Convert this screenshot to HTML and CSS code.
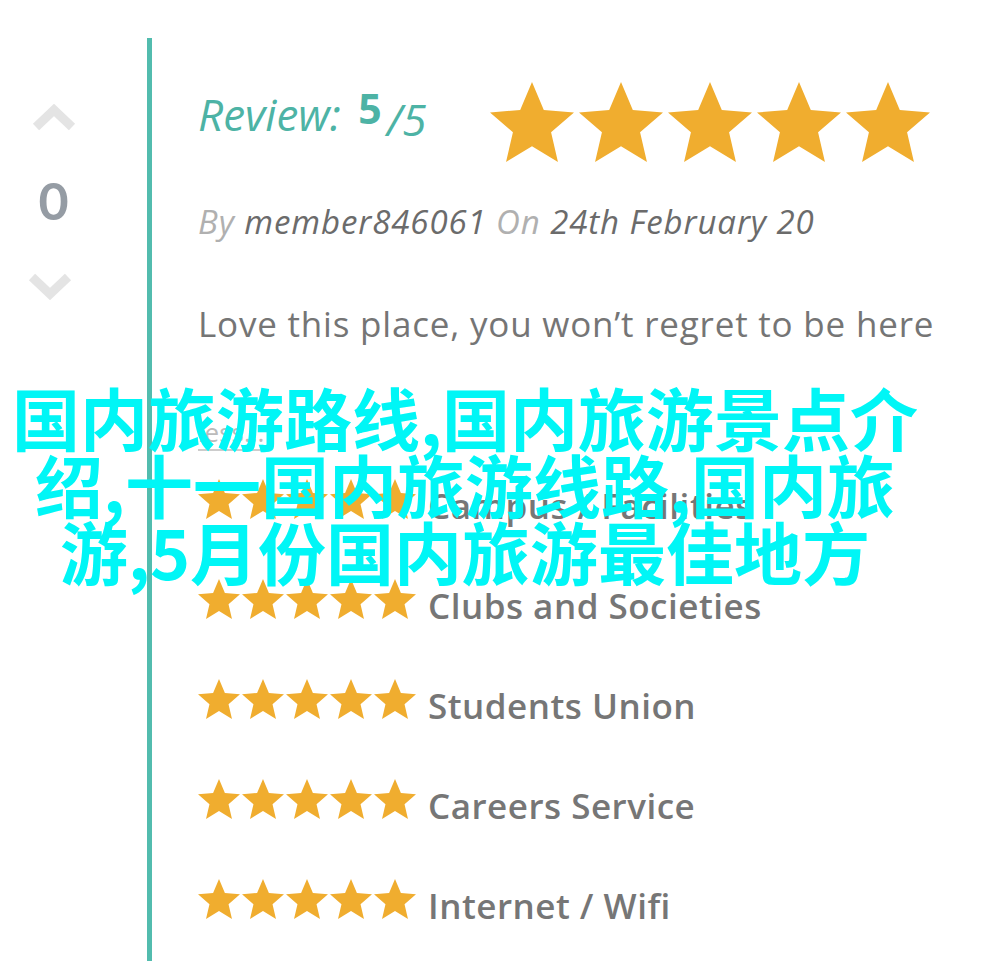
FILE: index.html
```html
<!DOCTYPE html>
<html lang="zh">
<head>
    <meta charset="UTF-8">
    <title>国内旅游路线</title>
    <link rel="stylesheet" href="styles.css">
</head>
<body>
    <svg width="0" height="0" class="defs">
        <defs>
            <symbol id="star" viewBox="2 2 20 19">
                <polygon points="12,17.27 18.18,21 16.54,13.97 22,9.24 14.81,8.63 12,2 9.19,8.63 2,9.24 7.46,13.97 5.82,21"/>
            </symbol>
        </defs>
    </svg>

    <div class="review">
        <div class="vote">
            <svg class="arrow" width="44" height="30" viewBox="0 0 44 30"><polyline points="4,25 22,8 40,25"/></svg>
            <div class="count">0</div>
            <svg class="arrow down" width="44" height="30" viewBox="0 0 44 30"><polyline points="4,7 22,24 40,7"/></svg>
        </div>

        <div class="content">
            <div class="head">
                <h2 class="title">Review: <b>5</b><span class="of">/5</span></h2>
                <div class="stars big">
                    <svg><use href="#star"/></svg>
                    <svg><use href="#star"/></svg>
                    <svg><use href="#star"/></svg>
                    <svg><use href="#star"/></svg>
                    <svg><use href="#star"/></svg>
                </div>
            </div>

            <p class="meta"><span class="dim">By</span> member846061 <span class="dim">On</span> 24th February 20</p>

            <p class="text">Love this place, you won’t regret to be here</p>

            <a class="less" href="#">less...</a>

            <ul class="ratings">
                <li>
                    <div class="stars"><svg><use href="#star"/></svg><svg><use href="#star"/></svg><svg><use href="#star"/></svg><svg><use href="#star"/></svg><svg><use href="#star"/></svg></div>
                    <span>Campus / Facilities</span>
                </li>
                <li>
                    <div class="stars"><svg><use href="#star"/></svg><svg><use href="#star"/></svg><svg><use href="#star"/></svg><svg><use href="#star"/></svg><svg><use href="#star"/></svg></div>
                    <span>Clubs and Societies</span>
                </li>
                <li>
                    <div class="stars"><svg><use href="#star"/></svg><svg><use href="#star"/></svg><svg><use href="#star"/></svg><svg><use href="#star"/></svg><svg><use href="#star"/></svg></div>
                    <span>Students Union</span>
                </li>
                <li>
                    <div class="stars"><svg><use href="#star"/></svg><svg><use href="#star"/></svg><svg><use href="#star"/></svg><svg><use href="#star"/></svg><svg><use href="#star"/></svg></div>
                    <span>Careers Service</span>
                </li>
                <li>
                    <div class="stars"><svg><use href="#star"/></svg><svg><use href="#star"/></svg><svg><use href="#star"/></svg><svg><use href="#star"/></svg><svg><use href="#star"/></svg></div>
                    <span>Internet / Wifi</span>
                </li>
            </ul>
        </div>
    </div>

    <h1 class="caption">国内旅游路线,国内旅游景点介绍,十一国内旅游线路,国内旅游,5月份国内旅游最佳地方</h1>
</body>
</html>
```

FILE: styles.css
```css
body {
    margin: 0;
    font-family: "Open Sans", Lato, sans-serif;
    background: #fff;
    height: 961px;
    overflow: hidden;
    position: relative;
}
.defs {
    position: absolute;
}
.review {
    display: flex;
    padding-top: 38px;
    height: 923px;
}
.vote {
    width: 147px;
    display: flex;
    flex-direction: column;
    align-items: center;
    padding-top: 64px;
    box-sizing: border-box;
}
.arrow {
    display: block;
    margin-right: 40px;
}
.arrow polyline {
    fill: none;
    stroke: #e4e4e4;
    stroke-width: 9;
}
.arrow.down {
    margin-right: 48px;
    margin-top: 44px;
}
.count {
    font-family: Lato, sans-serif;
    font-size: 52px;
    font-weight: bold;
    color: #959ca4;
    margin-top: 42px;
    margin-right: 40px;
    line-height: 52px;
}
.content {
    flex: 1;
    border-left: 5px solid #52bcae;
    padding-left: 46px;
}
.head {
    display: flex;
    align-items: center;
    margin-top: 44px;
}
.title {
    margin: 0 0 18px;
    width: 292px;
    font-size: 44px;
    font-style: italic;
    font-weight: normal;
    color: #4db3a5;
    line-height: 50px;
    white-space: nowrap;
}
.title b {
    font-style: normal;
    font-size: 41px;
    margin-left: 6px;
    vertical-align: 7px;
}
.title .of {
    font-size: 44px;
    margin-left: 5px;
    vertical-align: -5px;
}
.stars {
    display: flex;
    gap: 2px;
}
.stars svg {
    width: 42px;
    height: 40px;
    fill: #f0ad2f;
}
.stars.big {
    gap: 5px;
}
.stars.big svg {
    width: 84px;
    height: 80px;
}
.meta {
    margin: 40px 0 0;
    font-size: 33px;
    letter-spacing: 0.9px;
    line-height: 40px;
    font-style: italic;
    color: #6b6b6b;
    white-space: nowrap;
}
.meta .dim {
    color: #b0b0b0;
}
.text {
    margin: 62px 0 0;
    font-size: 35px;
    letter-spacing: 0.8px;
    line-height: 40px;
    color: #757575;
    white-space: nowrap;
}
.less {
    display: block;
    width: max-content;
    margin-top: 73px;
    font-size: 26px;
    line-height: 30px;
    padding-bottom: 2px;
    color: #bbb;
    text-decoration: none;
    border-bottom: 2px solid #ccc;
}
.ratings {
    list-style: none;
    margin: 4px 0 0;
    padding: 0;
}
.ratings li {
    display: flex;
    align-items: center;
    gap: 12px;
    height: 100px;
    font-size: 35px;
    letter-spacing: 0.5px;
    font-weight: 600;
    color: #767676;
}
.ratings .stars {
    margin-bottom: 12px;
}
.caption {
    position: absolute;
    top: 383px;
    left: 0;
    width: 930px;
    margin: 0;
    font-family: "Noto Sans CJK SC", sans-serif;
    font-size: 68px;
    line-height: 67px;
    font-weight: bold;
    text-align: center;
    color: #00f6f6;
}
```
